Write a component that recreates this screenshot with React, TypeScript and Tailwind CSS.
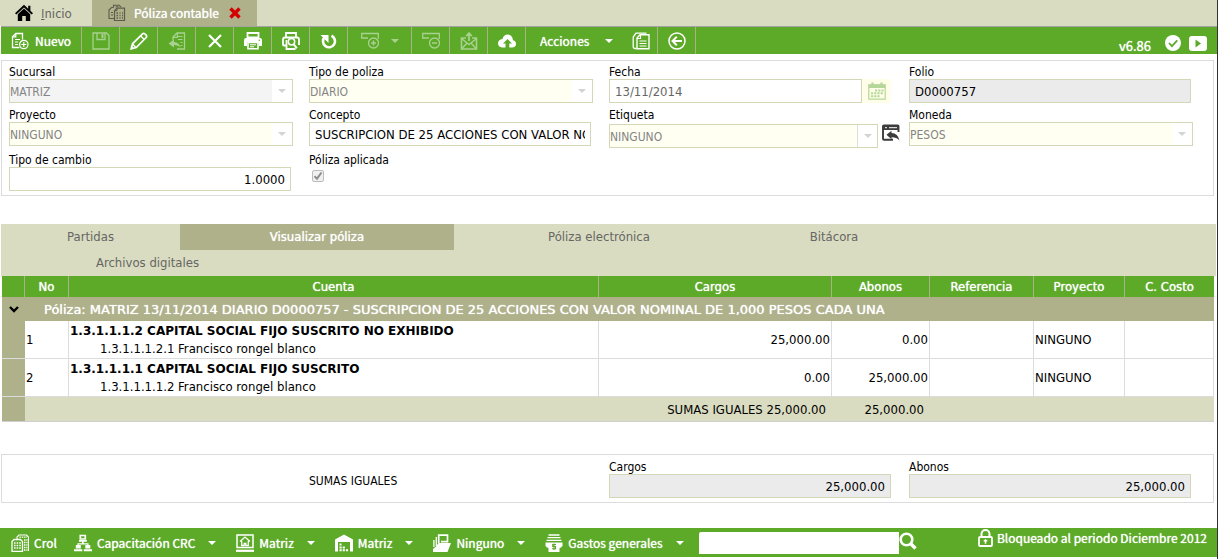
import { ReactNode, useState } from 'react'

const uiFont = "font-['DejaVu_Sans_Condensed','DejaVu_Sans',sans-serif]"
const wideFont = "font-['DejaVu_Sans',sans-serif]"
const barFont = "font-['Noto_Sans_CJK_SC','Noto_Sans',sans-serif]"
const glow = '[text-shadow:0_0_1px_currentColor]'
const buttonGlow = '[&_button]:[text-shadow:0_0_1px_currentColor]'

/* ---------- icons ---------- */

function Icon({ children, className = 'size-[18px]' }: { children: ReactNode; className?: string }) {
    return (
        <svg viewBox="0 0 18 18" className={`shrink-0 ${className}`} fill="none" stroke="currentColor" strokeWidth="1.4" aria-hidden="true">
            {children}
        </svg>
    )
}

const HomeIcon = () => (
    <Icon>
        <path d="M9 .8 0 9.2l1.3 1.2L9 3.4l7.7 7 1.3-1.2-2.6-2.4V1.8h-2.2v2.9z" fill="currentColor" stroke="none" />
        <path d="M9 4.6 2.8 10.2V17H7.2v-5h3.6v5h4.4v-6.8z" fill="currentColor" stroke="none" />
    </Icon>
)

const LedgerIcon = () => (
    <Icon>
        <path d="M5.5 3.5V1.2H11L13 3M5.5 3.5H3.5L1 6v8.5h5.5" strokeWidth="1.1" />
        <path d="M9 4.2h7.5v12.3H6.5V6.7z" strokeWidth="1.2" />
        <path d="M9 4.2v2.5H6.5M3 8.5h2M3 11h2M7.5 2.8h3" strokeWidth="1" />
        <path d="M8.5 9h1.5M11.5 9h1M14 9h1M8.5 11.5h1.5M11.5 11.5h1M14 11.5h1M8.5 14h1.5M11.5 14h1M14 14h1" strokeWidth="1.3" />
    </Icon>
)

const NewIcon = () => (
    <Icon>
        <path d="M8.5 15.5h-7V4.8L4.8 1.5h6.7v6" strokeWidth="1.3" />
        <path d="M4.8 1.5v3.3H1.5M4 7.5h5M4 10h3M4 12.5h3" strokeWidth="1.2" />
        <circle cx="12.8" cy="12.5" r="4.2" strokeWidth="1.2" />
        <path d="M12.8 10v5M10.3 12.5h5" strokeWidth="1.2" />
    </Icon>
)

const SaveIcon = () => (
    <Icon>
        <path d="M1 1h13.5L17 3.5V17H1z" strokeWidth="1.3" />
        <path d="M5 1v6.5h8V1" strokeWidth="1.3" />
        <path d="M9.5 2v4h2V2z" fill="currentColor" stroke="none" />
    </Icon>
)

const PencilIcon = () => (
    <Icon>
        <path d="m1.2 16.800 1.300-5L12.500 1.800q1.200-1 2.300 0l1.400 1.400q1 1.100 0 2.300L6.200 15.500z" strokeWidth="1.7" />
        <path d="m10.5 3.800 3.700 3.700M2.500 12 6 15.500" strokeWidth="1.3" />
        <path d="m.8 17.200 1-3.500 2.500 2.500z" fill="currentColor" stroke="none" />
    </Icon>
)

const ReturnDocIcon = () => (
    <Icon>
        <path d="M5 8V5l4-4h7.500v16H9" strokeWidth="1.3" />
        <path d="M9.300 1v4.300H5M10 4.500h4.500M10 7.500h4.500M12.500 10.500h2M12.500 13.500h2" strokeWidth="1.2" />
        <path d="m.5 11.500 5.500-4v2.500q5 .2 6.500 5.500-2.500-2.700-6.500-2.500v2.500z" fill="currentColor" stroke="none" />
    </Icon>
)

const CrossIcon = () => (
    <Icon>
        <path d="m3 3 12 12M15 3 3 15" strokeWidth="2.2" />
    </Icon>
)

const PrinterIcon = () => (
    <Icon>
        <path d="M3.500 5.500V1h11v4.500z" strokeWidth="1.8" />
        <path d="M2 6h14q2 0 2 2v6h-3v-3.500H3V14H0V8q0-2 2-2z" fill="currentColor" stroke="none" />
        <path d="M4 10.500h10v6.300H4z" strokeWidth="1.6" />
        <path d="M6 12.800h6M6 14.800h4" strokeWidth="1" />
        <circle cx="15.3" cy="8.3" r=".8" fill="#5caa28" stroke="none" />
    </Icon>
)

const PreviewIcon = () => (
    <Icon>
        <path d="M4 5V1h10v4" strokeWidth="1.8" />
        <path d="M4.500 13.500H2q-1 0-1-1V7.500Q1 5.500 3 5.500h12q2 0 2 2v5.500M4.500 8v9h9" strokeWidth="1.8" />
        <circle cx="9.5" cy="9.8" r="3.2" strokeWidth="1.5" />
        <path d="m11.800 12.300 3 4" strokeWidth="2" />
    </Icon>
)

const RefreshIcon = () => (
    <Icon>
        <path d="M11.500 3.800A6 6 0 1 1 4.800 5" strokeWidth="2.6" />
        <path d="M.5 3h8v8L6 8.500 3.500 6z" fill="currentColor" stroke="none" />
    </Icon>
)

const RowAddIcon = () => (
    <Icon>
        <path d="M7 6H.7V1.500h16.600V7" strokeWidth="1.3" />
        <circle cx="12.5" cy="11" r="5" strokeWidth="1.3" />
        <path d="M12.500 8.500v5M10 11h5" strokeWidth="1.5" />
    </Icon>
)

const RowRemoveIcon = () => (
    <Icon>
        <path d="M7 6H.7V1.500h16.600V7" strokeWidth="1.3" />
        <circle cx="12.5" cy="11" r="5" strokeWidth="1.3" />
        <path d="M10 11h5" strokeWidth="1.5" />
    </Icon>
)

const MailUpIcon = () => (
    <Icon>
        <path d="M6 6H1.500v11h15V6H12" strokeWidth="1.6" />
        <path d="m1.500 6.500 7.500 6 7.500-6M1.500 17l5.500-6M16.500 17 11 11" strokeWidth="1.5" />
        <path d="M9 9V2M6.200 4.200 9 1.200l2.800 3" strokeWidth="1.8" />
    </Icon>
)

const CloudIcon = () => (
    <Icon>
        <path d="M4 15.500H7.500v-4H5L9.500 7l4.500 4.500h-2.700v4h2.700q4-.3 4-3.600 0-3-3-3.600Q14.500 3 9.800 2.500 5.500 2.500 4.500 7 0 7.500 0 11.500q.2 3.600 4 4z" fill="currentColor" stroke="none" />
    </Icon>
)

const DocsIcon = () => (
    <Icon>
        <path d="M4.500 16.500H3q-1.800 0-1.800-1.800V5L4 1.200h10.500" strokeWidth="1.3" />
        <path d="M5 16.800V6l3-3.200h9v14z" strokeWidth="1.4" />
        <path d="M8.500 3v3.500H5M7.500 9h7M7.500 11.500h7M7.500 14h7" strokeWidth="1.2" />
    </Icon>
)

const BackIcon = () => (
    <Icon>
        <circle cx="9" cy="9" r="8" strokeWidth="1.5" />
        <path d="M14 9H5M8.800 4.700 4.500 9l4.300 4.300" strokeWidth="2" />
    </Icon>
)

const CheckBadgeIcon = () => (
    <Icon className="size-4">
        <circle cx="9" cy="9" r="9" fill="currentColor" stroke="none" />
        <path d="m4.500 9 3.300 3.500L13.800 6" stroke="#5caa28" strokeWidth="2" />
    </Icon>
)

const PlayBadgeIcon = () => (
    <svg viewBox="0 0 18 15" className="h-[15px] w-[18px]" aria-hidden="true">
        <rect width="18" height="15" rx="3" fill="#fff" />
        <path d="M6.500 3.500v8l5.500-4z" fill="#5caa28" />
    </svg>
)

const CalendarIcon = () => (
    <Icon>
        <path d="M.8 2.800h16.400v14.400H.8z" strokeWidth="1.2" />
        <path d="M.8 2.500h16.400v3.500H.8z" fill="currentColor" stroke="none" />
        <path d="M4.500.5v4M13.500.5v4" strokeWidth="2.2" />
        <path d="M7 8.500h8.500M3 11.300h12.500M3 14.200h9" strokeWidth="2" strokeDasharray="2.200 1" />
    </Icon>
)

const WindowBackIcon = () => (
    <Icon>
        <path d="M16.500 8V2.500q0-1-1-1H2q-1 0-1 1v12.300q0 1 1 1h9" strokeWidth="1.9" />
        <path d="M1 1.500h15.500V6H1z" fill="currentColor" stroke="none" />
        <path d="M3 3.700h2M7 3.700h8" stroke="#fff" strokeWidth="1" />
        <path d="m4.500 10.800 5-4v2.300q6.500.4 8 7.400-3-3.300-8-3.200v2z" fill="currentColor" stroke="none" />
    </Icon>
)

const BuildingsIcon = () => (
    <Icon>
        <path d="M6 5V3l2-2h7.500L17.500 3v14" strokeWidth="1.1" />
        <path d="M1 17.500V7.500l2-2h6.500l2 2v10z" strokeWidth="1.3" />
        <path d="M3 9h7M3 11.500h7M3 14h7" strokeWidth="1.5" strokeDasharray="1.600 1" />
        <path d="M8.500 3.200H16M13 6h3.500M13 8.500h3.500M13 11h3.500M13 13.500h3.500M13 16h3.500" strokeWidth="1.3" strokeDasharray="1.500 .8" />
    </Icon>
)

const OrgIcon = () => (
    <Icon>
        <path d="M6.300 1.500h5v3.500h-5z" strokeWidth="1.7" />
        <path d="M5 6H12.800v1.800H5zM8 7.500h1.700V10H8z" fill="currentColor" stroke="none" />
        <path d="M4 12V9.800h10V12" strokeWidth="1.2" />
        <path d="M1.800 11h5v3.500h-5zM11.300 11h5v3.500h-5zM0 15.200h8.300V17.200H0zM9.800 15.200H18V17.200H9.800z" fill="currentColor" stroke="none" />
    </Icon>
)

const HomeScreenIcon = () => (
    <Icon>
        <path d="M1 1h16v12.500H1z" strokeWidth="1.5" />
        <path d="M4 7.500 9 3l5 4.500M5.700 7v4.500h2.500v-2h1.600v2h2.500V7" strokeWidth="1.3" />
        <path d="M0 16.800h18" strokeWidth="2.2" />
    </Icon>
)

const WarehouseIcon = () => (
    <Icon>
        <path d="M0 17.500V5.500L9 .5l9 5v12h-3V8H3v9.500z" fill="currentColor" stroke="none" />
        <path d="M4.500 10.500h2M4.500 13.500h5.500M4.500 16.300h9" strokeWidth="1.9" strokeDasharray="2.200 1" />
    </Icon>
)

const FoldersIcon = () => (
    <Icon>
        <path d="M5.700 9V1.200h8.800v6.500H8" strokeWidth="1.7" />
        <path d="M3.300 3v9M.9 6v7" strokeWidth="1.3" />
        <path d="M0 18V15l3-2.500L5.500 9H18l-3.500 9z" fill="currentColor" stroke="none" />
    </Icon>
)

const MoneyIcon = () => (
    <Icon>
        <path d="M3.500 1h11M2.500 3.700h13M1.500 6.400h15" strokeWidth="1.3" />
        <path d="M.5 8.500h17V12q-1.500 2-3 2v4h-11v-4q-2-.5-3-2z" fill="currentColor" stroke="none" />
        <path d="M11 10.500H7.700v2h2.800v2.200H7M9 9.500v6.500" stroke="#5caa28" strokeWidth="1.1" />
    </Icon>
)

const SearchIcon = () => (
    <Icon>
        <circle cx="7.5" cy="7.5" r="5.8" strokeWidth="2.6" />
        <path d="m11.500 11.500 5 5" strokeWidth="3.4" />
    </Icon>
)

const LockIcon = () => (
    <svg viewBox="0 0 15 18" className="h-[18px] w-[15px] shrink-0" fill="none" stroke="currentColor" aria-hidden="true">
        <path d="M3.500 8V5a4 4 0 0 1 8 0v3" strokeWidth="2" />
        <rect x="1" y="8" width="13" height="9" rx="1" strokeWidth="1.8" />
        <path d="M7.500 10.200v4.600M5.700 11.800h3.600" strokeWidth="1.5" />
    </svg>
)

function Caret({ className = '' }: { className?: string }) {
    return (
        <svg viewBox="0 0 8 4" className={`h-1 w-2 shrink-0 ${className}`} fill="currentColor" aria-hidden="true">
            <path d="M0 0h8L4 4z" />
        </svg>
    )
}

/* ---------- form pieces ---------- */

const inputBase = 'h-6 min-w-0 border border-[#d4d8b8] px-[5px] pt-px text-[13px] outline-none'

function Field({ id, label, children }: { id: string; label: string; children: ReactNode }) {
    return (
        <div className="min-w-0 pb-1 text-[12px]">
            <label htmlFor={id} className="block h-[15px] leading-4">{label}</label>
            {children}
        </div>
    )
}

function Combo({ id, value, gray = false, split = false }: { id: string; value: string; gray?: boolean; split?: boolean }) {
    return (
        <div className="flex h-6 min-w-0 flex-1 border border-[#d4d8b8] bg-white">
            <select
                id={id}
                disabled
                defaultValue={value}
                className={`min-w-0 flex-1 appearance-none pt-[2px] text-[12px] text-[#848484] opacity-100 ${gray ? 'bg-[#f4f4f4]' : 'bg-[#fffff2]'}`}
            >
                <option>{value}</option>
            </select>
            <span className={`flex w-5 items-center justify-center text-[#d3d3d3] ${split ? 'border-l border-[#dcdfe2]' : ''}`}>
                <Caret />
            </span>
        </div>
    )
}

/* ---------- top bars ---------- */

interface Tool {
    name: string
    icon: ReactNode
    off?: boolean
    caret?: boolean
}

const tools: Tool[] = [
    { name: 'Guardar', icon: <SaveIcon />, off: true },
    { name: 'Editar', icon: <PencilIcon /> },
    { name: 'Deshacer', icon: <ReturnDocIcon />, off: true },
    { name: 'Eliminar', icon: <CrossIcon /> },
    { name: 'Imprimir', icon: <PrinterIcon /> },
    { name: 'Vista previa', icon: <PreviewIcon /> },
    { name: 'Actualizar', icon: <RefreshIcon /> },
    { name: 'Agregar partida', icon: <RowAddIcon />, off: true, caret: true },
    { name: 'Quitar partida', icon: <RowRemoveIcon />, off: true },
    { name: 'Enviar correo', icon: <MailUpIcon />, off: true },
    { name: 'Subir archivo', icon: <CloudIcon /> },
]

function WindowTabs() {
    return (
        <nav className={`flex h-[26px] bg-[#d9dcc0] text-[12px] leading-5 ${barFont}`}>
            <button className="flex w-[92px] items-center gap-2 pl-[15px] text-[#666]">
                <span className="text-black"><HomeIcon /></span>
                <span><u>I</u>nicio</span>
            </button>
            <div className="flex items-center bg-[#aeb18a] pr-4 pl-4 text-white">
                <button className="flex items-center gap-2">
                    <span className="text-[#5c5c4e]"><LedgerIcon /></span>
                    <span className={glow}>Póliza contable</span>
                </button>
                <button aria-label="Cerrar" className="ml-[10px] text-[#d40000]">
                    <svg viewBox="0 0 12 12" className="size-3" fill="none" stroke="currentColor" strokeWidth="3.4" aria-hidden="true">
                        <path d="m1.500 1.500 9 9M10.500 1.500l-9 9" />
                    </svg>
                </button>
            </div>
        </nav>
    )
}

function Toolbar() {
    return (
        <div className={`ml-px flex h-7 border-t border-[#a3a3a3] bg-[#5caa28] text-[12px] leading-5 text-white ${glow} ${buttonGlow} ${barFont}`}>
            <button className="flex w-[81px] items-center gap-[6px] border-r border-[#a9b387] pl-[10px]">
                <NewIcon />
                Nuevo
            </button>
            {tools.map((t) => (
                <button
                    key={t.name}
                    aria-label={t.name}
                    disabled={t.off}
                    className={`flex items-center justify-center gap-3 border-r border-[#a9b387] ${t.caret ? 'w-16' : 'w-[38px]'} ${t.off ? 'text-[#a9d18f]' : ''}`}
                >
                    {t.icon}
                    {t.caret && <Caret />}
                </button>
            ))}
            <button className="flex w-[98px] items-center gap-4 pl-[14px]">
                <span>Acciones</span>
                <Caret />
            </button>
            <button aria-label="Documentos" className="flex w-[34px] items-center justify-center border-r border-[#a9b387]">
                <DocsIcon />
            </button>
            <button aria-label="Regresar" className="flex w-[38px] items-center justify-center border-r border-[#a9b387]">
                <BackIcon />
            </button>
            <div className="ml-auto flex items-center gap-2 pt-[5px] pr-[10px]">
                <span className="pt-[6px] pr-[6px] text-[13px]">v6.86</span>
                <button aria-label="Estado"><CheckBadgeIcon /></button>
                <button aria-label="Video"><PlayBadgeIcon /></button>
            </div>
        </div>
    )
}

/* ---------- header form ---------- */

function PolizaForm() {
    return (
        <form className="mt-[6px] mr-[3px] ml-px grid grid-cols-4 border border-[#dcdcdc] pt-[3px] pr-1 pl-[7px]">
            <Field id="sucursal" label="Sucursal">
                <div className="mr-4 flex"><Combo id="sucursal" value="MATRIZ" gray /></div>
            </Field>
            <Field id="tipo" label="Tipo de poliza">
                <div className="mr-4 flex"><Combo id="tipo" value="DIARIO" /></div>
            </Field>
            <Field id="fecha" label="Fecha">
                <div className="mr-[18px] flex">
                    <input id="fecha" defaultValue="13/11/2014" className={`${inputBase} flex-1 text-[#666]`} />
                    <button type="button" aria-label="Abrir calendario" className="flex w-[29px] items-center justify-center bg-[#ffffe9] text-[#b5d79a]">
                        <CalendarIcon />
                    </button>
                </div>
            </Field>
            <Field id="folio" label="Folio">
                <div className="mr-[18px] flex">
                    <input id="folio" readOnly value="D0000757" className={`${inputBase} flex-1 bg-[#ebebeb]`} />
                </div>
            </Field>

            <Field id="proyecto" label="Proyecto">
                <div className="mr-4 flex"><Combo id="proyecto" value="NINGUNO" /></div>
            </Field>
            <Field id="concepto" label="Concepto">
                <div className="mr-[18px] flex">
                    <input
                        id="concepto"
                        defaultValue="SUSCRIPCION DE 25 ACCIONES CON VALOR NOMINAL DE 1,000 PESOS CADA UNA"
                        className={`${inputBase} flex-1`}
                    />
                </div>
            </Field>
            <Field id="etiqueta" label="Etiqueta">
                <div className="mr-[9px] flex gap-1 pt-[2px]">
                    <Combo id="etiqueta" value="NINGUNO" split />
                    <button type="button" aria-label="Asignar etiqueta" className="self-start text-[#3c3c3c]"><WindowBackIcon /></button>
                </div>
            </Field>
            <Field id="moneda" label="Moneda">
                <div className="mr-4 flex"><Combo id="moneda" value="PESOS" /></div>
            </Field>

            <Field id="cambio" label="Tipo de cambio">
                <div className="mr-[18px] flex">
                    <input id="cambio" defaultValue="1.0000" className={`${inputBase} flex-1 text-right`} />
                </div>
            </Field>
            <Field id="aplicada" label="Póliza aplicada">
                <span className="ml-[3px] grid size-[13px] pt-[3px]">
                    <input
                        id="aplicada"
                        type="checkbox"
                        defaultChecked
                        disabled
                        className="col-start-1 row-start-1 size-3 appearance-none rounded-[2px] border border-[#bdbdbd] bg-[#f0f0f0]"
                    />
                    <svg viewBox="0 0 12 12" className="pointer-events-none col-start-1 row-start-1 size-3" fill="none" stroke="#8e8e8e" strokeWidth="2" aria-hidden="true">
                        <path d="m2.500 6.200 2.500 2.500L9.500 2.500" />
                    </svg>
                </span>
            </Field>
        </form>
    )
}

/* ---------- detail ---------- */

const sections = [
    { name: 'Partidas', width: 'w-[179px]' },
    { name: 'Visualizar póliza', width: 'w-[274px]' },
    { name: 'Póliza electrónica', width: 'w-[290px]' },
    { name: 'Bitácora', width: 'w-[180px]' },
    { name: 'Archivos digitales', width: 'w-[293px]' },
]

function SectionTabs() {
    const [active, setActive] = useState('Visualizar póliza')

    return (
        <div role="tablist" className="mt-7 mr-px ml-px flex flex-wrap bg-[#d9dcc0] text-[13px] leading-[26px]">
            {sections.map((s) => (
                <button
                    key={s.name}
                    role="tab"
                    aria-selected={active === s.name}
                    onClick={() => setActive(s.name)}
                    className={`h-[26px] text-center ${s.width} ${active === s.name ? `bg-[#aeb18a] text-white ${glow}` : 'text-[#666]'}`}
                >
                    {s.name}
                </button>
            ))}
        </div>
    )
}

const columns = ['', 'No', 'Cuenta', 'Cargos', 'Abonos', 'Referencia', 'Proyecto', 'C. Costo']

const rows = [
    { no: 1, parent: '1.3.1.1.1.2 CAPITAL SOCIAL FIJO SUSCRITO NO EXHIBIDO', child: '1.3.1.1.1.2.1 Francisco rongel blanco', cargos: '25,000.00', abonos: '0.00' },
    { no: 2, parent: '1.3.1.1.1.1 CAPITAL SOCIAL FIJO SUSCRITO', child: '1.3.1.1.1.1.2 Francisco rongel blanco', cargos: '0.00', abonos: '25,000.00' },
]

function MovementsTable() {
    const cell = 'border-r border-b border-[#dcdcdc] px-px'

    return (
        <div className="mr-[3px] ml-[2px]">
            <table className="w-full table-fixed border-separate border-spacing-0 text-[13px] leading-[17px]">
                <colgroup>
                    <col className="w-[23px]" />
                    <col className="w-[44px]" />
                    <col />
                    <col className="w-[233px]" />
                    <col className="w-[98px]" />
                    <col className="w-[104px]" />
                    <col className="w-[91px]" />
                    <col className="w-[89px]" />
                </colgroup>
                <thead>
                    <tr className="h-[21px] bg-[#5caa28] text-white">
                        {columns.map((c) => (
                            <th key={c} className={`border-r border-[#a9b387] font-normal last:border-r-0 ${glow}`}>{c}</th>
                        ))}
                    </tr>
                </thead>
                <tbody>
                    <tr className="h-6 bg-[#aeb18a] text-white">
                        <td className="text-black">
                            <button aria-label="Contraer" className="flex w-full justify-center">
                                <svg viewBox="0 0 10 7" className="h-[7px] w-[10px]" fill="none" stroke="currentColor" strokeWidth="2.4" aria-hidden="true">
                                    <path d="m1 1 4 4 4-4" />
                                </svg>
                            </button>
                        </td>
                        <td colSpan={7} className={`pt-px pl-[19px] ${glow} ${wideFont}`}>
                            Póliza: MATRIZ 13/11/2014 DIARIO D0000757 - SUSCRIPCION DE 25 ACCIONES CON VALOR NOMINAL DE 1,000 PESOS CADA UNA
                        </td>
                    </tr>
                    {rows.map((r) => (
                        <tr key={r.no} className="h-[38px]">
                            <td className="border-b border-[#dcdcdc] bg-[#aeb18a]" />
                            <td className={cell}>{r.no}</td>
                            <td className={cell}>
                                <div className={`text-[12px] font-bold ${wideFont}`}>{r.parent}</div>
                                <div className="pl-[30px]">{r.child}</div>
                            </td>
                            <td className={`${cell} text-right`}>{r.cargos}</td>
                            <td className={`${cell} text-right`}>{r.abonos}</td>
                            <td className={cell} />
                            <td className={cell}>NINGUNO</td>
                            <td className={cell} />
                        </tr>
                    ))}
                </tbody>
                <tfoot>
                    <tr className="h-[25px] bg-[#d9dcc0]">
                        <td className="border-b border-[#cfcfcf] bg-[#aeb18a]" />
                        <td colSpan={3} className="border-b border-[#cfcfcf] pr-[6px] text-right">SUMAS IGUALES 25,000.00</td>
                        <td className="border-b border-[#cfcfcf] pr-[6px] text-right">25,000.00</td>
                        <td colSpan={3} className="border-b border-[#cfcfcf]" />
                    </tr>
                </tfoot>
            </table>
        </div>
    )
}

function Totals() {
    return (
        <section className="mt-8 mr-[3px] ml-px grid grid-cols-4 border border-[#dcdcdc] pt-1 pr-1 pl-[7px] text-[12px]">
            <span className="col-start-2 self-center">SUMAS IGUALES</span>
            <Field id="cargos" label="Cargos">
                <div className="mr-[18px] flex">
                    <input id="cargos" readOnly value="25,000.00" className={`${inputBase} flex-1 bg-[#ebebeb] text-right`} />
                </div>
            </Field>
            <Field id="abonos" label="Abonos">
                <div className="mr-[18px] flex">
                    <input id="abonos" readOnly value="25,000.00" className={`${inputBase} flex-1 bg-[#ebebeb] text-right`} />
                </div>
            </Field>
        </section>
    )
}

/* ---------- status bar ---------- */

const contexts = [
    { key: 'empresa', label: 'Capacitación CRC', icon: <OrgIcon /> },
    { key: 'sucursal', label: 'Matriz', icon: <HomeScreenIcon /> },
    { key: 'almacen', label: 'Matriz', icon: <WarehouseIcon /> },
    { key: 'proyecto', label: 'Ninguno', icon: <FoldersIcon /> },
    { key: 'gastos', label: 'Gastos generales', icon: <MoneyIcon /> },
]

function StatusBar() {
    return (
        <footer className={`mt-[25px] flex h-[29px] items-center bg-[#5caa28] pl-[11px] text-[12px] leading-5 whitespace-nowrap text-white ${glow} ${buttonGlow} ${barFont}`}>
            <button className="mr-[17px] flex items-center gap-[5px]">
                <BuildingsIcon />
                Crol
            </button>
            <div className="flex items-center gap-5">
                {contexts.map((c) => (
                    <button key={c.key} className="flex items-center gap-[5px]">
                        {c.icon}
                        <span>{c.label}</span>
                        <Caret className="ml-2" />
                    </button>
                ))}
            </div>
            <div className="ml-[15px] flex">
                <input aria-label="Buscar" className="h-[22px] w-[200px] rounded-tl-[2px] bg-white px-1 text-black outline-none" />
                <button aria-label="Iniciar búsqueda" className="self-start"><SearchIcon /></button>
            </div>
            <div className="ml-auto flex items-center gap-1 self-start pr-[10px]">
                <LockIcon />
                Bloqueado al periodo Diciembre 2012
            </div>
        </footer>
    )
}

export default function App() {
    return (
        <div className={`min-h-screen border-r border-[#333] bg-white text-black ${uiFont}`}>
            <WindowTabs />
            <Toolbar />
            <main>
                <PolizaForm />
                <SectionTabs />
                <MovementsTable />
                <Totals />
            </main>
            <StatusBar />
        </div>
    )
}
